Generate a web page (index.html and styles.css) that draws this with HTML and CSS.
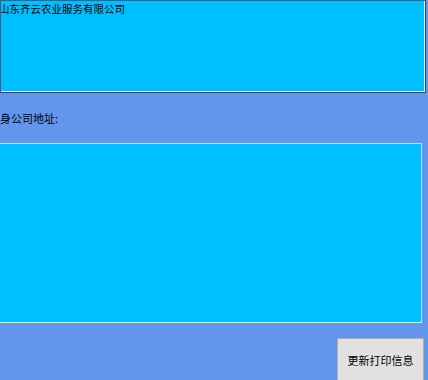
FILE: index.html
```html
<!DOCTYPE html>
<html lang="zh">
<head>
    <meta charset="UTF-8">
    <title>打印信息</title>
    <link rel="stylesheet" href="styles.css">
</head>
<body>
    <div class="form">
        <div class="text-box box-name">
            <span class="box-text">山东齐云农业服务有限公司</span>
        </div>
        <div class="field-label">身公司地址:</div>
        <div class="text-box box-address"></div>
        <div class="actions">
            <button class="update-btn">更新打印信息</button>
        </div>
    </div>
</body>
</html>
```

FILE: styles.css
```css
html, body {
    margin: 0;
    padding: 0;
    width: 428px;
    height: 380px;
    overflow: hidden;
    background: #6495ed;
    font-family: "Noto Sans CJK SC", "DejaVu Sans", sans-serif;
    font-size: 11px;
    color: #000;
}
.form {
    display: flex;
    flex-direction: column;
}
.text-box {
    background: #00bfff;
    box-sizing: border-box;
}
.box-name {
    width: 426px;
    height: 93px;
    border-top: 1px solid #4a5a86;
    border-left: 1px solid #4a5a86;
    border-right: 1px solid #3c4660;
    border-bottom: 1px solid #3c4660;
    box-shadow: inset -1px -1px 0 #d8f4ff;
    overflow: hidden;
}
.box-text {
    display: block;
    margin-left: -2px;
    font-size: 10.5px;
    line-height: 14px;
    margin-top: 1px;
}
.field-label {
    height: 50px;
    padding-top: 18px;
    box-sizing: border-box;
    line-height: 14px;
}
.box-address {
    width: 422px;
    height: 180px;
    border-top: 1px solid #a8e8ff;
    border-right: 1px solid #a8e8ff;
    border-bottom: 1px solid #e0f8ff;
    border-left: none;
    box-shadow: -1px 0 0 #5aa0e8, 1px 0 0 #5aa0e8;
}
.actions {
    display: flex;
    justify-content: flex-end;
    padding-top: 15px;
    padding-right: 4px;
}
.update-btn {
    width: 87px;
    height: 44px;
    background: #e1e1e1;
    border: 1px solid #adadad;
    font-family: "Noto Sans CJK SC", "DejaVu Sans", sans-serif;
    font-size: 11px;
    color: #000;
    padding: 0;
}
```
